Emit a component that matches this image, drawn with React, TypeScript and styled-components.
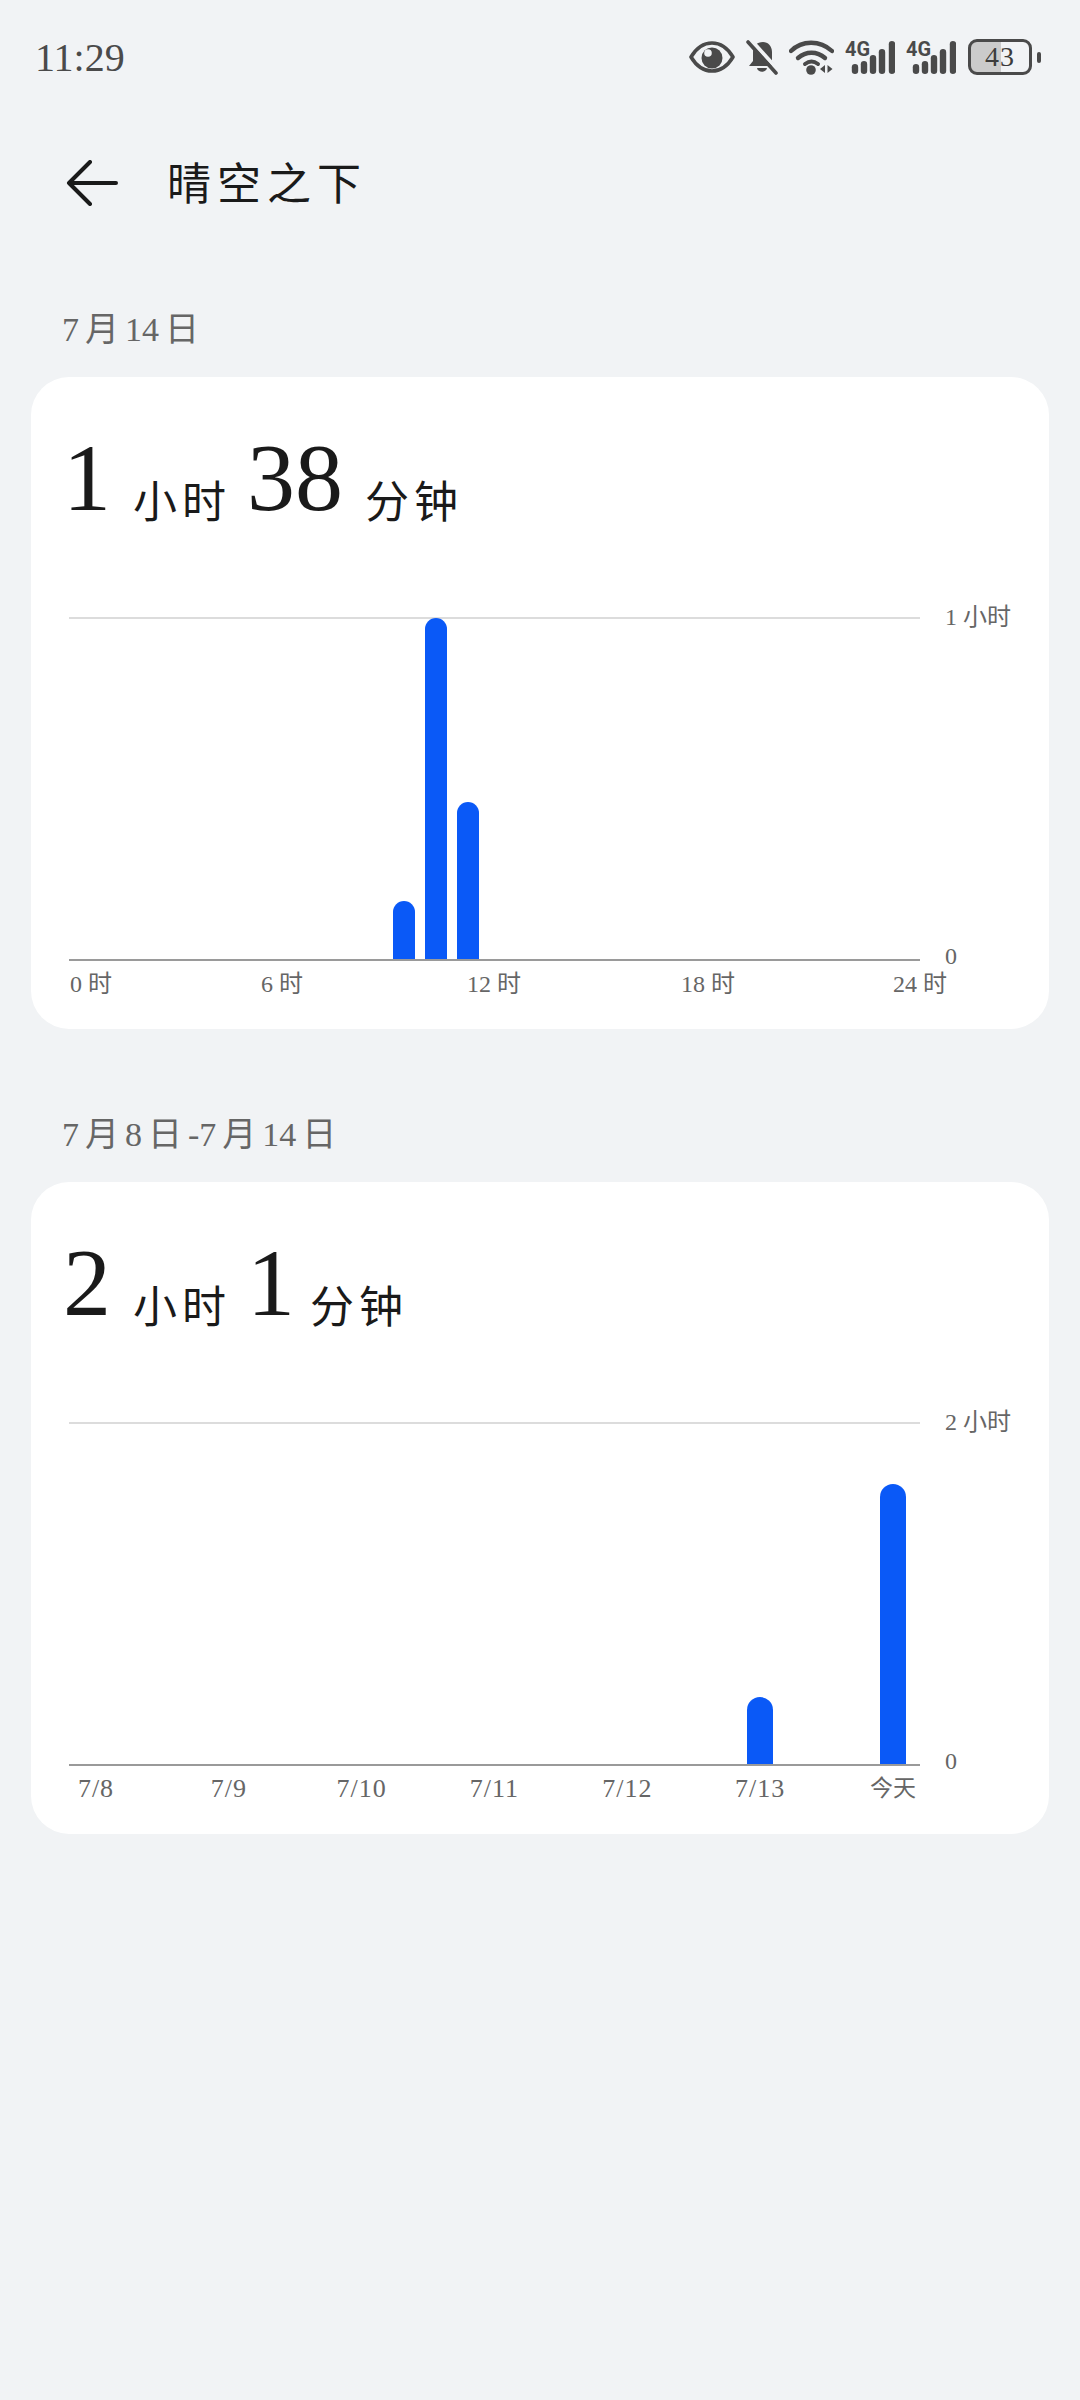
import React from 'react';
import styled, {createGlobalStyle} from 'styled-components';

const FONT = `"Liberation Serif", "Noto Sans CJK SC", serif`;

const GlobalStyle = createGlobalStyle`
  html, body {
    margin: 0;
    padding: 0;
    background: #f1f3f5;
  }
  * { box-sizing: border-box; }
`;

const Page = styled.div`
  width: 1080px;
  height: 2400px;
  background: #f1f3f5;
  font-family: ${FONT};
  overflow: hidden;
`;

const StatusBar = styled.div`
  height: 114px;
  padding: 0 39px 0 35px;
  display: flex;
  align-items: center;
  justify-content: space-between;
`;

const Clock = styled.div`
  font-size: 40px;
  color: #4a4a4a;
`;

const StatusIcons = styled.div`
  display: flex;
  align-items: center;
  gap: 11px;
`;

const BatteryWrap = styled.div`
  display: flex;
  align-items: center;
  gap: 5px;
  margin-left: 1px;
`;

const BatteryBody = styled.div`
  width: 64px;
  height: 36px;
  border: 3px solid #4a4a4a;
  border-radius: 9px;
  background: linear-gradient(90deg, #cbcbcb 0 30px, transparent 30px);
  display: flex;
  align-items: center;
  justify-content: center;
  font-size: 28px;
  line-height: 30px;
  letter-spacing: 1px;
  color: #3c3c3c;
`;

const BatteryNub = styled.div`
  width: 4px;
  height: 11px;
  border-radius: 2px;
  background: #4a4a4a;
`;

const TitleBar = styled.div`
  height: 138px;
  padding-left: 66px;
  display: flex;
  align-items: center;
  gap: 49px;
`;

const Title = styled.div`
  font-size: 44px;
  line-height: 60px;
  letter-spacing: 6px;
  color: #1a1a1a;
  margin-top: 6px;
`;

const Section = styled.section`
  padding: 58px 31px 0;
  & + & { margin-top: 28px; }
`;

const DateLabel = styled.div`
  height: 40px;
  line-height: 40px;
  margin: 0 0 27px 31px;
  font-size: 34px;
  color: #666;
  word-spacing: -2.500px;
`;

const Card = styled.div`
  width: 1018px;
  height: 652px;
  background: #fff;
  border-radius: 38px;
  padding: 0 0 0 38px;
`;

const Total = styled.div`
  height: 240px;
  padding-top: 41px;
  margin-left: -6px;
  color: #1a1a1a;
  line-height: 120px;
  white-space: nowrap;
`;

const TotalNum = styled.span`
  font-size: 96px;
`;

const TotalUnit = styled.span<{$gap?: number}>`
  font-size: 44px;
  letter-spacing: 5px;
  margin: 0 16px 0 ${p => p.$gap ?? 22}px;
  vertical-align: -8px;
`;

const ChartRow = styled.div`
  display: flex;
`;

const Plot = styled.div`
  width: 851px;
  height: 344px;
  border-top: 2px solid #dcdcdc;
  border-bottom: 2px solid #9a9a9a;
`;

const HourBars = styled.div`
  height: 100%;
  padding-left: 324px;
  display: flex;
  align-items: flex-end;
  gap: 10px;
`;

const DayBars = styled.div`
  height: 100%;
  display: flex;
  align-items: flex-end;
  justify-content: space-between;
`;

const DaySlot = styled.div`
  width: 54px;
  display: flex;
  justify-content: center;
`;

const Bar = styled.div<{$w: number; $h: number}>`
  width: ${p => p.$w}px;
  height: ${p => p.$h}px;
  background: #0a59f7;
  border-radius: ${p => p.$w / 2}px ${p => p.$w / 2}px 0 0;
`;

const YAxis = styled.div`
  height: 371px;
  margin: -16px 0 0 25px;
  display: flex;
  flex-direction: column;
  justify-content: space-between;
`;

const AxisText = styled.div`
  font-size: 24px;
  line-height: 32px;
  color: #666;
  white-space: nowrap;
`;

const HourTicks = styled.div`
  display: grid;
  grid-template-columns: 191px 206px 214px 212px auto;
  margin: -4px 0 0 1px;
`;

const DayTicks = styled.div`
  width: 851px;
  margin-top: -4px;
  display: flex;
  justify-content: space-between;
`;

const DayTick = styled(AxisText)<{$cjk?: boolean}>`
  width: 54px;
  display: flex;
  justify-content: center;
  font-size: ${p => (p.$cjk ? 23 : 26)}px;
  letter-spacing: ${p => (p.$cjk ? 0 : 1)}px;
`;

const Eye = () => (
  <svg width="46" height="32" viewBox="0 0 46 32">
    <path d="M2 16C8 6 15 2 23 2s15 4 21 14c-6 10-13 14-21 14S8 26 2 16z" fill="none" stroke="#4a4a4a" strokeWidth="3.600" strokeLinejoin="round"/>
    <circle cx="23" cy="17" r="10.500" fill="#4a4a4a"/>
    <circle cx="19" cy="12" r="3.800" fill="#f1f3f5"/>
  </svg>
);

const BellOff = () => (
  <svg width="32" height="36" viewBox="0 0 32 36">
    <path d="M17 3c5 0 9 4 9 10v9l4 5H3l4-5v-9c0-6 4-10 10-10z" fill="#4a4a4a"/>
    <path d="M11 29h10c-1 5-9 5-10 0z" fill="#4a4a4a"/>
    <path d="M5 1l28 31" stroke="#f1f3f5" strokeWidth="4"/>
    <path d="M2 3l28 31" stroke="#4a4a4a" strokeWidth="3.600" strokeLinecap="round"/>
  </svg>
);

const Wifi = () => (
  <svg width="45" height="36" viewBox="0 0 45 36">
    <path d="M2 12C13 1 31 1 43 12" fill="none" stroke="#4a4a4a" strokeWidth="4.400" strokeLinecap="round"/>
    <path d="M9 19c8-7 19-7 27 0" fill="none" stroke="#4a4a4a" strokeWidth="4.400" strokeLinecap="round"/>
    <path d="M16 25c4-3 9-3 13 0" fill="none" stroke="#4a4a4a" strokeWidth="4" strokeLinecap="round"/>
    <circle cx="22" cy="31" r="4.800" fill="#4a4a4a"/>
    <path d="M36 26v8l-5-4zM38.500 26v8l5-4z" fill="#4a4a4a"/>
  </svg>
);

const SIGNAL_BARS = [[10, 10], [19, 13], [28, 19], [37, 25], [47, 33]];

const Signal = () => (
  <svg width="50" height="40" viewBox="0 0 50 40">
    <text x="0" y="19" fontFamily="Roboto, sans-serif" fontWeight="700" fontSize="20" fill="#4a4a4a" textLength="25" lengthAdjust="spacingAndGlyphs">4G</text>
    {SIGNAL_BARS.map(([x, h]) => (
      <rect key={x} x={x - 3.2} y={37 - h} width="6.400" height={h} rx="3.200" fill="#4a4a4a"/>
    ))}
  </svg>
);

const BackArrow = () => (
  <svg width="52" height="46" viewBox="0 0 52 46">
    <path d="M50 23H3M24 2L3 23l21 21" fill="none" stroke="#1a1a1a" strokeWidth="4" strokeLinecap="round" strokeLinejoin="round"/>
  </svg>
);

const ChartAxis = ({top}: {top: string}) => (
  <YAxis>
    <AxisText>{top}</AxisText>
    <AxisText>0</AxisText>
  </YAxis>
);

const HOURS = ['0 时', '6 时', '12 时', '18 时', '24 时'];
const DAYS = ['7/8', '7/9', '7/10', '7/11', '7/12', '7/13'];
const HOUR_BARS = [58, 341, 157];
const DAY_BARS = [0, 0, 0, 0, 0, 67, 280];

const App = () => (
  <Page>
    <GlobalStyle/>
    <StatusBar>
      <Clock>11:29</Clock>
      <StatusIcons>
        <Eye/>
        <BellOff/>
        <Wifi/>
        <Signal/>
        <Signal/>
        <BatteryWrap>
          <BatteryBody>43</BatteryBody>
          <BatteryNub/>
        </BatteryWrap>
      </StatusIcons>
    </StatusBar>
    <TitleBar>
      <BackArrow/>
      <Title>晴空之下</Title>
    </TitleBar>
    <Section>
      <DateLabel>7 月 14 日</DateLabel>
      <Card>
        <Total>
          <TotalNum>1</TotalNum><TotalUnit>小时</TotalUnit>
          <TotalNum>38</TotalNum><TotalUnit>分钟</TotalUnit>
        </Total>
        <ChartRow>
          <Plot>
            <HourBars>
              {HOUR_BARS.map((h, i) => <Bar key={i} $w={22} $h={h}/>)}
            </HourBars>
          </Plot>
          <ChartAxis top="1 小时"/>
        </ChartRow>
        <HourTicks>
          {HOURS.map(t => <AxisText key={t}>{t}</AxisText>)}
        </HourTicks>
      </Card>
    </Section>
    <Section>
      <DateLabel>7 月 8 日 -7 月 14 日</DateLabel>
      <Card>
        <Total>
          <TotalNum>2</TotalNum><TotalUnit>小时</TotalUnit>
          <TotalNum>1</TotalNum><TotalUnit $gap={15}>分钟</TotalUnit>
        </Total>
        <ChartRow>
          <Plot>
            <DayBars>
              {DAY_BARS.map((h, i) => (
                <DaySlot key={i}>{h > 0 && <Bar $w={26} $h={h}/>}</DaySlot>
              ))}
            </DayBars>
          </Plot>
          <ChartAxis top="2 小时"/>
        </ChartRow>
        <DayTicks>
          {DAYS.map(t => <DayTick key={t}>{t}</DayTick>)}
          <DayTick $cjk>今天</DayTick>
        </DayTicks>
      </Card>
    </Section>
  </Page>
);

export default App;
